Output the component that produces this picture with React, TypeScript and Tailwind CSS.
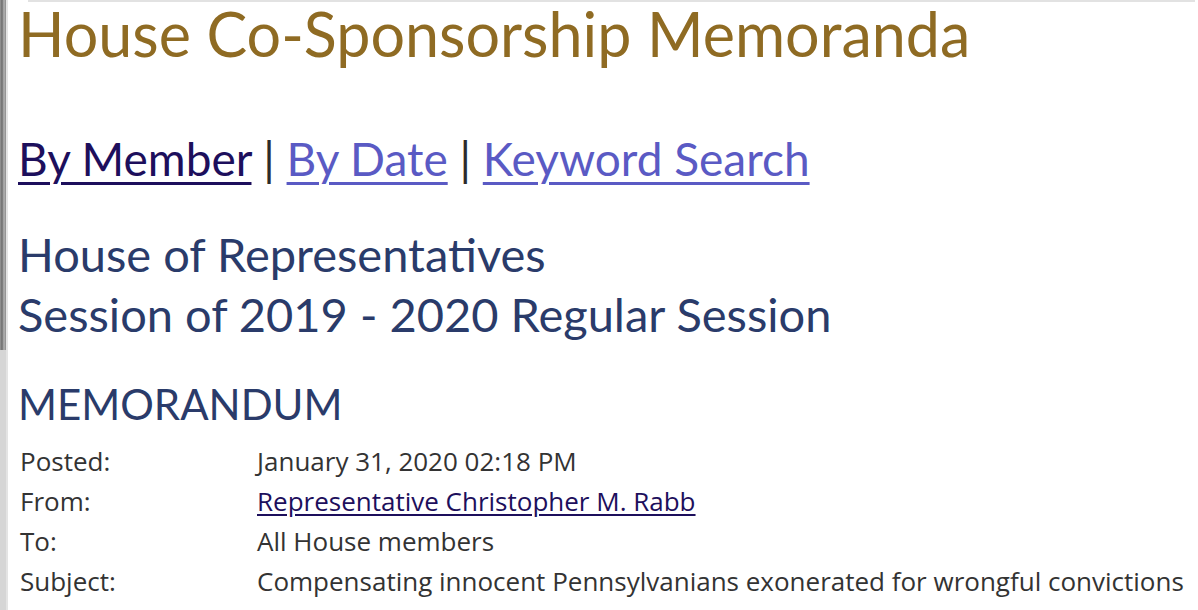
import React from "react";

export default function App() {
  const rows: [string, React.ReactNode][] = [
    ["Posted:", "January 31, 2020 02:18 PM"],
    [
      "From:",
      <a href="#" className="underline text-[#1d0f5c] underline-offset-[3px]">
        Representative Christopher M. Rabb
      </a>,
    ],
    ["To:", "All House members"],
    ["Subject:", "Compensating innocent Pennsylvanians exonerated for wrongful convictions"],
  ];
  return (
    <div className="flex w-[1198px] h-[610px] overflow-hidden bg-white">
      <div className="flex flex-col w-[6px] shrink-0">
        <div className="h-[350px] bg-[linear-gradient(90deg,#9a9a9a_0px,#6b6b6b_2px,#b5b5b5_4px,#8a8a8a_6px)]" />
        <div className="flex-1 bg-[#d6d6d6]" />
      </div>
      <div className="w-[2px] shrink-0 bg-[#e4e4e4]" />
      <div className="flex-1 pl-[10px] pr-[3px]">
        <div className="h-[2px] ml-[10px] bg-[#e2e2e2]" />
        <div style={{ fontFamily: "Lato, sans-serif" }}>
          <h1 className="text-[61px] leading-[64px] text-[#8f6b23] whitespace-nowrap">
            House Co-Sponsorship Memoranda
          </h1>
          <div className="mt-[63px] text-[46px] leading-[60px] text-[#2b2b2b] whitespace-nowrap">
            <a href="#" className="underline text-[#1d0f5c] decoration-[3px] underline-offset-[6px]">By Member</a>
            {" | "}
            <a href="#" className="underline text-[#5a5ac4] decoration-[3px] underline-offset-[6px]">By Date</a>
            {" | "}
            <a href="#" className="underline text-[#5a5ac4] decoration-[3px] underline-offset-[6px]">Keyword Search</a>
          </div>
          <h2 className="mt-[35px] text-[47px] leading-[60px] text-[#2a3b6a] whitespace-nowrap">
            House of Representatives
            <br />
            Session of 2019 - 2020 Regular Session
          </h2>
          <h3 className="mt-[30px] text-[42px] leading-[60px] text-[#2a3b6a]">MEMORANDUM</h3>
        </div>
        <div
          className="mt-[7px] grid grid-cols-[239px_1fr] text-[26px] leading-[40px] text-[#333] whitespace-nowrap"
          style={{ fontFamily: "'Open Sans', sans-serif" }}
        >
          {rows.map(([k, v]) => (
            <React.Fragment key={k}>
              <div className="pl-[2px]">{k}</div>
              <div>{v}</div>
            </React.Fragment>
          ))}
        </div>
      </div>
    </div>
  );
}
